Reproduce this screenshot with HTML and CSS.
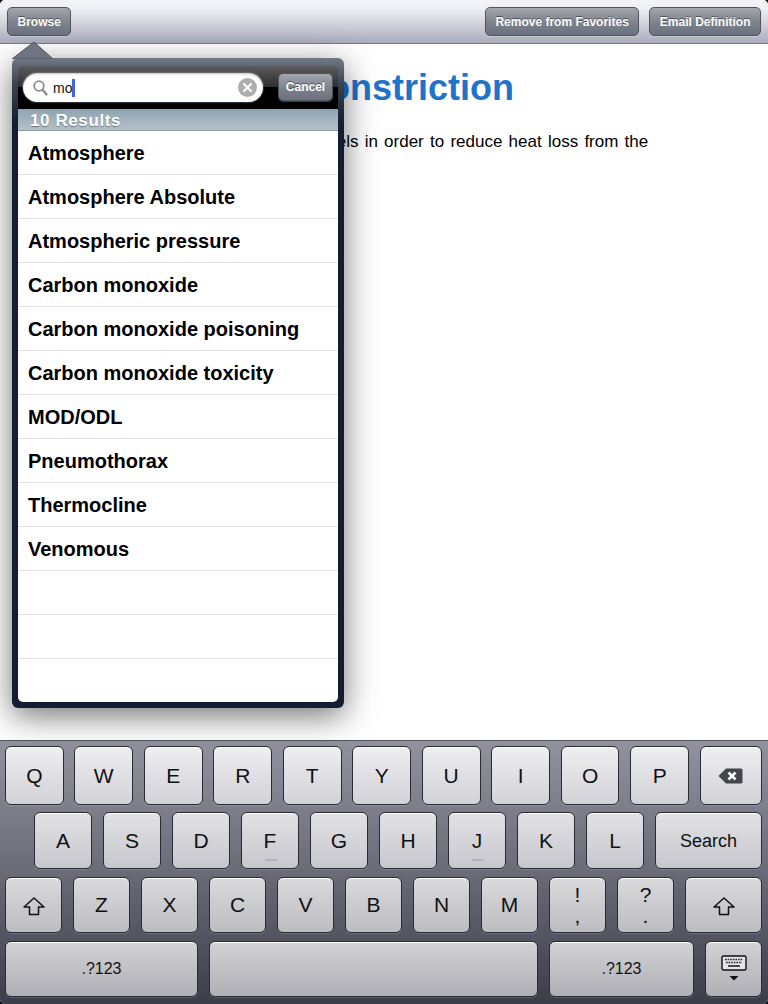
FILE: index.html
```html
<!DOCTYPE html>
<html lang="en">
<head>
  <meta charset="utf-8">
  <title>Vasoconstriction</title>
  <link rel="stylesheet" href="styles.css">
</head>
<body>
<div class="screen">
  <div class="toolbar">
    <span class="btn">Browse</span>
    <span class="toolbar-right">
      <span class="btn">Remove from Favorites</span>
      <span class="btn">Email Definition</span>
    </span>
  </div>

  <div class="content">
    <h1>Vasoconstriction</h1>
    <p>Narrowed blood vessels in order to reduce heat loss from the body.</p>
  </div>

  <!-- popover with search results -->
  <div class="popover">
    <svg class="popover-arrow" width="44" height="18" viewBox="0 0 44 18">
      <path d="M0 18 L22 1 L41 18 Z" fill="#6f7481" stroke="#4c515d"/>
    </svg>
    <div class="searchbar">
      <div class="field">
        <svg class="glass" width="15" height="16" viewBox="0 0 15 16">
          <circle cx="6" cy="6" r="4.8" fill="none" stroke="#8a8d92" stroke-width="1.8"/>
          <path d="M9.5 9.8 L13.5 14.4" stroke="#8a8d92" stroke-width="2.4" stroke-linecap="round"/>
        </svg>
        <span class="query">mo</span><span class="caret"></span>
        <svg class="clear" width="19" height="19" viewBox="0 0 19 19">
          <circle cx="9.5" cy="9.5" r="9.5" fill="#aeaeae"/>
          <path d="M6 6 L13 13 M13 6 L6 13" stroke="#fff" stroke-width="2.2" stroke-linecap="round"/>
        </svg>
      </div>
      <span class="btn cancel">Cancel</span>
    </div>
    <div class="results-head">10 Results</div>
    <ul class="results">
      <li>Atmosphere</li>
      <li>Atmosphere Absolute</li>
      <li>Atmospheric pressure</li>
      <li>Carbon monoxide</li>
      <li>Carbon monoxide poisoning</li>
      <li>Carbon monoxide toxicity</li>
      <li>MOD/ODL</li>
      <li>Pneumothorax</li>
      <li>Thermocline</li>
      <li>Venomous</li>
      <li></li>
      <li></li>
      <li></li>
    </ul>
  </div>

  <div class="keyboard">
    <div class="row row1">
      <span class="key">Q</span><span class="key">W</span><span class="key">E</span><span class="key">R</span><span class="key">T</span><span class="key">Y</span><span class="key">U</span><span class="key">I</span><span class="key">O</span><span class="key">P</span>
      <span class="key grow">
        <svg width="25" height="16" viewBox="0 0 25 16">
          <path d="M8 0.5 H23 Q24.5 0.5 24.5 2 V14 Q24.5 15.5 23 15.5 H8 L0.5 8 Z" fill="#44454a"/>
          <path d="M10.5 4.5 L17.5 11.5 M17.5 4.5 L10.5 11.5" stroke="#fff" stroke-width="2.6"/>
        </svg>
      </span>
    </div>
    <div class="row row2">
      <span class="key">A</span><span class="key">S</span><span class="key">D</span><span class="key bump">F</span><span class="key">G</span><span class="key">H</span><span class="key bump">J</span><span class="key">K</span><span class="key">L</span>
      <span class="key grow small">Search</span>
    </div>
    <div class="row row3">
      <span class="key"><svg class="shift" width="22" height="19" viewBox="0 0 22 19"><path d="M11 1 L21 10 H15.5 V17.5 H6.5 V10 H1 Z" fill="none" stroke="#111" stroke-width="1.5" stroke-linejoin="round"/></svg></span>
      <span class="key">Z</span><span class="key">X</span><span class="key">C</span><span class="key">V</span><span class="key">B</span><span class="key">N</span><span class="key">M</span>
      <span class="key stack"><b>!</b><b>,</b></span><span class="key stack"><b>?</b><b>.</b></span>
      <span class="key grow"><svg class="shift" width="22" height="19" viewBox="0 0 22 19"><path d="M11 1 L21 10 H15.5 V17.5 H6.5 V10 H1 Z" fill="none" stroke="#111" stroke-width="1.5" stroke-linejoin="round"/></svg></span>
    </div>
    <div class="row row4">
      <span class="key num-left tiny">.?123</span>
      <span class="key space"></span>
      <span class="key num-right tiny">.?123</span>
      <span class="key grow">
        <svg width="26" height="28" viewBox="0 0 26 28">
          <rect x="1" y="1" width="24" height="14" rx="1.5" fill="#e4e4e6" stroke="#111" stroke-width="1.4"/>
          <path d="M4 4.5 H22 M5 7.5 H21" stroke="#222" stroke-width="1.6" stroke-dasharray="1.6 1"/>
          <path d="M7 11 H19" stroke="#222" stroke-width="1.6"/>
          <path d="M8.5 21 H17.5 L13 25.5 Z" fill="#111"/>
        </svg>
      </span>
    </div>
  </div>
</div>
</body>
</html>
```

FILE: styles.css
```css
html, body {
  margin: 0;
  height: 100%;
  background: #000;
}
.screen {
  position: relative;
  display: flex;
  flex-direction: column;
  height: 1004px;
  overflow: hidden;
  border-radius: 5px;
  background: #fff;
  font-family: "Liberation Sans", Arial, sans-serif;
}

/* toolbar */
.toolbar {
  display: flex;
  justify-content: space-between;
  align-items: flex-start;
  box-sizing: border-box;
  height: 44px;
  padding: 7px 7px 0;
  border-bottom: 1px solid #777b88;
  background: linear-gradient(#f3f4f7 0, #eff0f4 20%, #a9acbb 100%);
}
.toolbar-right { display: flex; gap: 10px; }
.btn {
  display: inline-block;
  box-sizing: border-box;
  height: 29px;
  padding: 0 9.5px;
  border: 1px solid #4f545f;
  border-radius: 5px;
  background: linear-gradient(#a3a7ae 0, #7f848e 50%, #6b717d 100%);
  box-shadow: 0 1px 0 rgba(255, 255, 255, 0.25);
  color: #fff;
  font-size: 12px;
  font-weight: bold;
  line-height: 28px;
  text-shadow: 0 -1px 0 rgba(0, 0, 0, 0.45);
  white-space: nowrap;
}

/* definition behind the popover */
.content {
  flex: 1;
  padding: 0 110px 0 20px;
}
.content h1 {
  margin: 24px 0 0 204px;
  color: #1f74ca;
  font-size: 36px;
  line-height: 40px;
  white-space: nowrap;
}
.content p {
  margin: 24px 0 0 154px;
  font-size: 17px;
  line-height: 20px;
  word-spacing: 1.5px;
}

/* popover */
.popover {
  position: absolute;
  top: 58px;
  left: 12px;
  display: flex;
  flex-direction: column;
  box-sizing: border-box;
  width: 332px;
  height: 650px;
  padding: 0 6px 6px;
  border-radius: 6px;
  background: linear-gradient(#737884 0, #3a4252 4%, #151d33 10%, #151d33 100%);
  box-shadow: 0 8px 32px rgba(0, 0, 0, 0.55);
}
.popover-arrow {
  position: absolute;
  top: -17px;
  left: 0;
}
.searchbar {
  display: flex;
  align-items: flex-start;
  justify-content: space-between;
  box-sizing: border-box;
  height: 43px;
  margin-top: 8px;
  padding: 7px 5px 0;
  border-radius: 4px 4px 0 0;
  background: linear-gradient(#5c5c5e 0, #2e2e30 48%, #000 49%, #000 100%);
}
.field {
  display: flex;
  align-items: center;
  box-sizing: border-box;
  width: 240px;
  height: 29px;
  padding: 0 6px 0 10px;
  border-radius: 15px;
  background: #fff;
  box-shadow: 0 0 2px #bbb, inset 0 1px 2px rgba(0, 0, 0, 0.25);
}
.glass { margin-right: 5px; }
.query {
  color: #111;
  font-size: 14px;
}
.caret {
  width: 3px;
  height: 18px;
  background: #3f64e8;
}
.clear { margin-left: auto; }
.cancel {
  width: 55px;
  height: 28px;
  padding: 0;
  text-align: center;
  line-height: 26px;
}
.results-head {
  box-sizing: border-box;
  height: 22px;
  padding-left: 12px;
  border-bottom: 1px solid #8c9aa5;
  background: linear-gradient(#8fa3b1, #b6c1ca);
  color: #fff;
  font-size: 17px;
  font-weight: bold;
  line-height: 23px;
  letter-spacing: 0.6px;
  text-shadow: 0 1px 1px rgba(60, 75, 90, 0.6);
}
.results {
  flex: 1;
  margin: 0;
  padding: 0;
  overflow: hidden;
  border-radius: 0 0 5px 5px;
  background: #fff;
  list-style: none;
}
.results li {
  box-sizing: border-box;
  height: 44px;
  padding-left: 10px;
  border-bottom: 1px solid #e0e0e0;
  color: #000;
  font-size: 20px;
  font-weight: bold;
  line-height: 44px;
}

/* keyboard */
.keyboard {
  display: flex;
  flex-direction: column;
  box-sizing: border-box;
  height: 264px;
  padding-top: 5px;
  border-top: 1px solid #55565f;
  background: linear-gradient(#92929f 0, #6b6b78 50%, #3c3d48 100%);
}
.row { display: flex; }
.row1 { height: 59px; gap: 10.9px; padding: 0 6px 0 5px; }
.row2 { height: 57px; gap: 11px; margin-top: 7px; padding: 0 6px 0 34px; }
.row3 { height: 56px; gap: 11px; margin-top: 8px; padding: 0 6px 0 5px; }
.row4 { height: 56px; gap: 11px; margin-top: 8px; padding: 0 6px 0 5px; }
.key {
  display: flex;
  flex-direction: column;
  align-items: center;
  justify-content: center;
  position: relative;
  box-sizing: border-box;
  border: 1px solid #2b2b33;
  border-radius: 6px;
  box-shadow: inset 0 1px 0 #fff, 0 1px 0 rgba(255, 255, 255, 0.15);
  color: #111;
  font-size: 21px;
}
.row1 .key { width: 58.6px; background: linear-gradient(#efeff1, #d1d1d7); }
.row2 .key { width: 58px; padding-top: 1px; background: linear-gradient(#e2e2e5, #c7c7cd); }
.row3 .key { width: 57px; background: linear-gradient(#dadadd, #bcbcc2); }
.row4 .key { background: linear-gradient(#d3d3d6, #afafb5); }
.row1 .grow, .row2 .grow, .row3 .grow, .row4 .grow {
  flex: 1;
  width: auto;
}
.row4 .num-left { width: 193px; }
.row4 .space { width: 329px; }
.row4 .num-right { width: 145px; }
.small { font-size: 18px; }
.tiny { font-size: 16px; }
.stack b {
  display: block;
  font-weight: normal;
  line-height: 21px;
}
.bump::after {
  content: "";
  position: absolute;
  left: 23px;
  bottom: 7px;
  width: 12px;
  height: 2px;
  background: #b2b2b8;
}
.shift { margin-top: 2px; }
```
